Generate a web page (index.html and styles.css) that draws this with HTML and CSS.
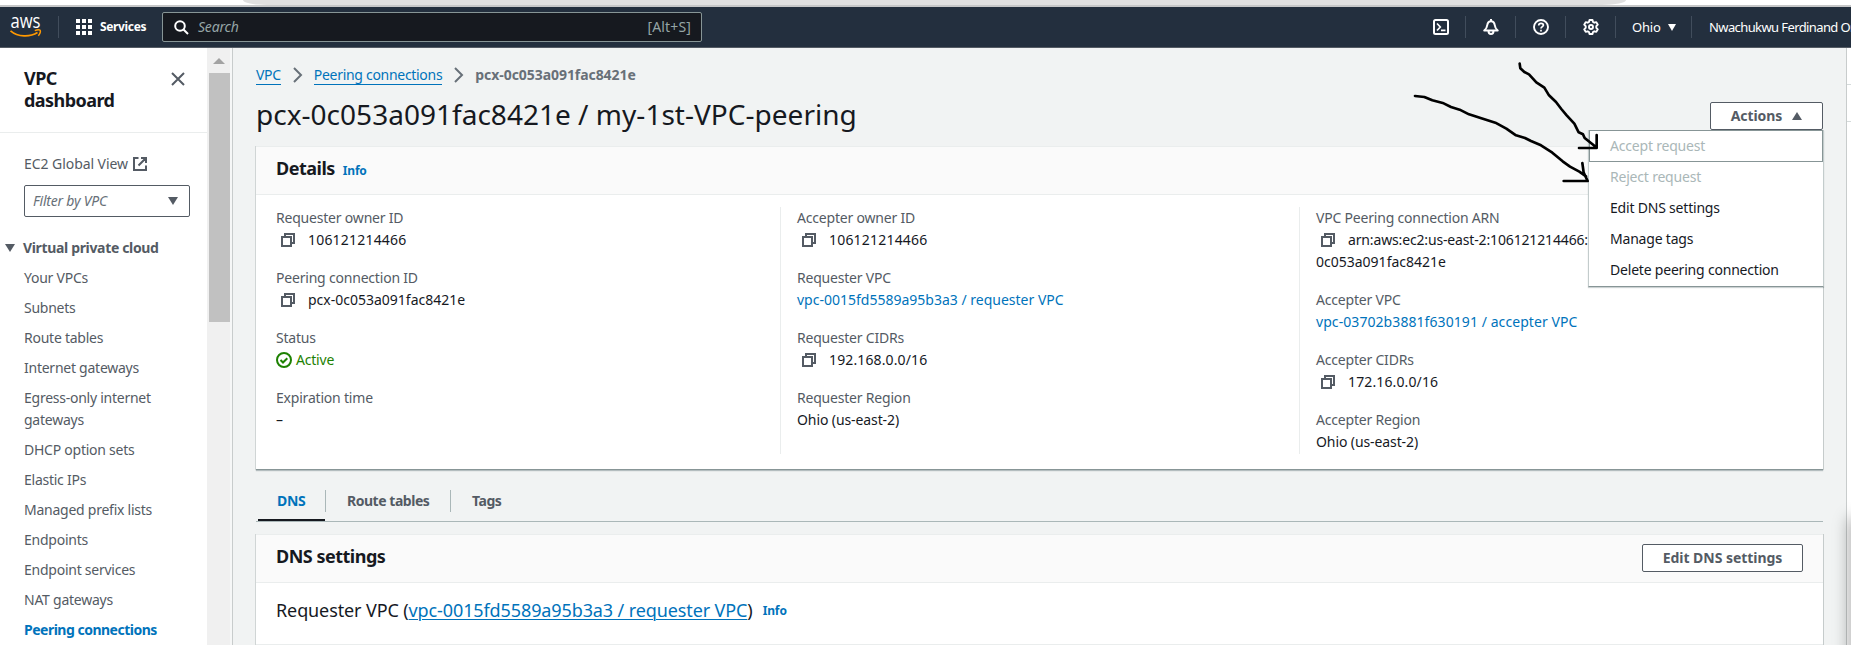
FILE: index.html
```html
<!DOCTYPE html>
<html lang="en">
<head>
<meta charset="utf-8">
<title>Peering connections | VPC Console</title>
<link rel="stylesheet" href="styles.css">
</head>
<body>
<svg class="defs" width="0" height="0" aria-hidden="true">
  <symbol id="copy" viewBox="0 0 16 16"><path d="M2 5h9v9H2zM5 5V2h9v9h-3" fill="none" stroke="#545b64" stroke-width="2"/></symbol>
  <symbol id="chev" viewBox="0 0 16 16"><path d="M4 1l7 7-7 7" fill="none" stroke="#687078" stroke-width="2"/></symbol>
</svg>
<div class="browser"><div class="omnibox"></div></div>
<header class="topnav">
  <div class="logo"><svg width="32" height="28" viewBox="0 0 32 28"><text class="aws" x="0.5" y="17" textLength="30" lengthAdjust="spacingAndGlyphs">aws</text><path d="M.5 19.800C8 26.200 20 26.200 27.500 21.500" fill="none" stroke="#f90" stroke-width="1.700"/><path d="M24.800 19.700c2-1 4.600-1.100 5.400-.4.600.9-.2 3.700-1.900 5.400" fill="none" stroke="#f90" stroke-width="1.500"/></svg></div>
  <div class="services"><svg width="16" height="16" viewBox="0 0 16 16" fill="#fff"><path d="M0 0h4v4H0zM6 0h4v4H6zM12 0h4v4h-4zM0 6h4v4H0zM6 6h4v4H6zM12 6h4v4h-4zM0 12h4v4H0zM6 12h4v4H6zM12 12h4v4h-4z"/></svg><b>Services</b></div>
  <div class="search"><svg width="15" height="15" viewBox="0 0 15 15" fill="none" stroke="#fff" stroke-width="2"><circle cx="6" cy="6" r="4.800"/><path d="M9.500 9.500l4.500 4.500"/></svg><i>Search</i><span class="shortcut">[Alt+S]</span></div>
  <div class="tools">
    <span class="tool"><svg width="16" height="16" viewBox="0 0 16 16" fill="none" stroke="#fff" stroke-width="2"><rect x="1" y="1" width="14" height="14" rx="1.500"/><path d="M4 4.500L7.300 8 4 11.500M8 11.300h4.500" stroke-width="1.700"/></svg></span>
    <span class="tool"><svg width="16" height="16" viewBox="0 0 16 16" fill="none" stroke="#fff" stroke-width="2" stroke-linejoin="round"><path d="M1.300 11.500h13.400C12.300 9.500 12 8.500 11.700 6 11.400 3.200 10 2.200 8 2.200S4.600 3.200 4.300 6C4 8.500 3.700 9.500 1.300 11.500zM8 0v2M5.500 12c0 4 5 4 5 0"/></svg></span>
    <span class="tool"><svg width="16" height="16" viewBox="0 0 16 16" fill="none" stroke="#fff" stroke-width="1.900"><circle cx="8" cy="8" r="7"/><path d="M5.700 6.500c0-3 4.700-2.800 4.700-.2C10.400 7.700 8 7.700 8 9.600M8 10.700v1.900" stroke-width="1.700"/></svg></span>
    <span class="tool"><svg width="16" height="16" viewBox="0 0 16 16" fill="none" stroke="#fff" stroke-width="1.900" stroke-linejoin="round"><path d="M6.500 1h3l.5 2 1.300.7 2-.6 1.500 2.600L13.300 7.200v1.600l1.500 1.500-1.500 2.600-2-.6-1.300.7-.5 2h-3l-.5-2-1.300-.7-2 .6-1.500-2.600L2.700 8.800V7.200L1.200 5.700l1.500-2.600 2 .6L6 3z"/><circle cx="8" cy="8" r="2"/></svg></span>
    <span class="region"><span>Ohio</span><svg width="8" height="7" viewBox="0 0 8 7"><path d="M0 0h8L4 7z" fill="#fff"/></svg></span>
    <span class="user">Nwachukwu Ferdinand On</span>
  </div>
</header>
<div class="app">
  <aside class="side">
    <div class="side-head"><h2>VPC<br>dashboard</h2><svg width="14" height="14" viewBox="0 0 14 14"><path d="M1 1l12 12M13 1L1 13" stroke="#545b64" stroke-width="2"/></svg></div>
    <div class="global"><span>EC2 Global View</span><svg width="14" height="14" viewBox="0 0 14 14" fill="none" stroke="#545b64" stroke-width="2"><path d="M5.500 1H1v12h12V8.500M8 1h5v5M13 1L5.500 8.500"/></svg></div>
    <div class="filter"><i>Filter by VPC</i><svg width="10" height="8" viewBox="0 0 10 8"><path d="M0 0h10L5 8z" fill="#545b64"/></svg></div>
    <div class="group"><svg width="10" height="8" viewBox="0 0 10 8"><path d="M0 0h10L5 8z" fill="#545b64"/></svg><b>Virtual private cloud</b></div>
    <nav class="links">
      <a>Your VPCs</a><a>Subnets</a><a>Route tables</a><a>Internet gateways</a><a>Egress-only internet<br>gateways</a><a>DHCP option sets</a><a>Elastic IPs</a><a>Managed prefix lists</a><a>Endpoints</a><a>Endpoint services</a><a>NAT gateways</a><a class="current">Peering connections</a>
    </nav>
  </aside>
  <div class="scroll"><svg width="12" height="6" viewBox="0 0 12 6"><path d="M0 6l6-6 6 6z" fill="#a3a3a3"/></svg><div class="thumb"></div></div>
  <main class="main">
    <div class="crumbs"><a>VPC</a><svg width="16" height="16"><use href="#chev"/></svg><a>Peering connections</a><svg width="16" height="16"><use href="#chev"/></svg><b>pcx-0c053a091fac8421e</b></div>
    <div class="heading"><h1>pcx-0c053a091fac8421e / my-1st-VPC-peering</h1>
      <div class="actions"><div class="btn open"><span>Actions</span><svg width="10" height="8" viewBox="0 0 10 8"><path d="M0 8h10L5 0z" fill="#545b64"/></svg></div>
        <div class="menu"><div class="off focus">Accept request</div><div class="off">Reject request</div><div>Edit DNS settings</div><div>Manage tags</div><div>Delete peering connection</div></div>
      </div>
    </div>
    <section class="panel details">
      <div class="panel-head"><h3>Details</h3><b class="info">Info</b></div>
      <div class="cols">
        <dl><dt>Requester owner ID</dt><dd><svg class="cp"><use href="#copy"/></svg><span class="digits">106121214466</span></dd><dt>Peering connection ID</dt><dd><svg class="cp"><use href="#copy"/></svg><span class="num">pcx-0c053a091fac8421e</span></dd><dt>Status</dt><dd class="ok"><svg width="16" height="16" viewBox="0 0 16 16" fill="none" stroke="#1d8102" stroke-width="2"><circle cx="8" cy="8" r="7"/><path d="M4.500 8l2.500 2.500 4.300-4.300"/></svg>Active</dd><dt>Expiration time</dt><dd>–</dd></dl>
        <dl><dt>Accepter owner ID</dt><dd><svg class="cp"><use href="#copy"/></svg><span class="digits">106121214466</span></dd><dt>Requester VPC</dt><dd><a class="num">vpc-0015fd5589a95b3a3 / requester VPC</a></dd><dt>Requester CIDRs</dt><dd><svg class="cp"><use href="#copy"/></svg><span class="cidr">192.168.0.0/16</span></dd><dt>Requester Region</dt><dd><span class="place">Ohio (us-east-2)</span></dd></dl>
        <dl><dt>VPC Peering connection ARN</dt><dd class="arn"><svg class="cp"><use href="#copy"/></svg><span class="arn-text">arn:aws:ec2:us-east-2:106121214466:</span></dd><dd><span class="num">0c053a091fac8421e</span></dd><dt>Accepter VPC</dt><dd><a class="wide">vpc-03702b3881f630191 / accepter VPC</a></dd><dt>Accepter CIDRs</dt><dd><svg class="cp"><use href="#copy"/></svg><span class="cidr">172.16.0.0/16</span></dd><dt>Accepter Region</dt><dd><span class="place">Ohio (us-east-2)</span></dd></dl>
      </div>
    </section>
    <div class="tabs"><div class="tab on">DNS</div><div class="tab second">Route tables</div><div class="tab">Tags</div></div>
    <section class="panel dns">
      <div class="panel-head"><h3>DNS settings</h3><div class="btn edit">Edit DNS settings</div></div>
      <div class="vpc-line"><span>Requester VPC (<a>vpc-0015fd5589a95b3a3 / requester VPC</a>)</span><b class="info">Info</b></div>
    </section>
  </main>
  <div class="rail"><div class="rail-top"></div><div class="rail-mid"></div></div>
</div>
<div class="edge-shadow"></div>
<svg class="marks" width="240" height="200" viewBox="0 0 720 600" fill="none" stroke="#000" stroke-width="8" stroke-linecap="round" stroke-linejoin="round">
  <path d="M446 191l2 14 12 11 14 7 22 24 24 16 14 23 21 20 16 21 16 19 23 25 13 26 13 6 5 11 31 25M677 405v39h-53"/>
  <path d="M132 288l28 3 24 10 34 9 22 11 26 8 28 14 37 12 42 13 33 18 29 20 27 8 18 9 30 13 34 22 31 26 22 16 28 15 20 14M634 489l4 29 12 25h-72"/>
</svg>
</body>
</html>
```
FILE: styles.css
```css
* { box-sizing: border-box; }
html { height: 645px; overflow: hidden; }
body { margin: 0; width: 1851px; height: 645px; overflow: hidden; position: relative; background: #f1f3f3; color: #16191f; font: 14px/22px "Noto Sans", "Open Sans", sans-serif; letter-spacing: -0.2px; white-space: nowrap; }
svg { display: block; flex: none; }
.defs { position: absolute; }
h1, h2, h3, dl, dd { margin: 0; }
.browser { height: 7px; background: #fff; border-bottom: 2px solid #c6c7c8; }
.omnibox { height: 5px; margin: 0 225px 0 243px; background: #e0e0e0; border-radius: 0 0 24px 24px / 0 0 5px 5px; }
.topnav { height: 41px; display: flex; align-items: center; background: #232f3e; border-bottom: 1px solid #545b64; color: #fff; }
.logo { width: 59px; height: 22px; padding-left: 10px; border-right: 1px solid #414d5c; }
.logo svg { margin-top: -5px; overflow: visible; }
.aws { font: 500 20px "Open Sans", sans-serif; letter-spacing: 0; fill: #fff; }
.services { display: flex; align-items: center; gap: 8px; width: 103px; padding-left: 17px; font-size: 12px; letter-spacing: -0.35px; }
.search { width: 540px; height: 30px; display: flex; align-items: center; padding: 0 10px 0 11px; background: #16191f; border: 1px solid #879596; border-radius: 2px; color: #95a5a6; }
.search i { margin-left: 9px; flex: 1; }
.shortcut { letter-spacing: 0.15px; }
.tools { display: flex; align-items: center; margin-left: 714px; flex: 1; overflow: hidden; height: 40px; font-size: 13px; }
.tool { width: 50px; height: 22px; display: flex; align-items: center; justify-content: center; border-right: 1px solid #414d5c; flex: none; }
.region { display: flex; align-items: center; gap: 7px; width: 76px; height: 22px; padding-left: 16px; border-right: 1px solid #414d5c; flex: none; }
.user { padding-left: 17px; letter-spacing: -0.6px; }
.app { display: flex; height: 597px; }
.side { width: 207px; background: #fff; overflow: hidden; color: #545b64; }
.side-head { display: flex; justify-content: space-between; height: 85px; padding: 20px 22px 0 24px; border-bottom: 1px solid #eaeded; }
.side-head h2 { color: #16191f; font-size: 18px; line-height: 22px; letter-spacing: -0.55px; margin-top: -1px; }
.side-head svg { margin-top: 4px; }
.global { display: flex; align-items: center; gap: 5px; padding: 20px 0 0 24px; letter-spacing: -0.06px; }
.filter { display: flex; align-items: center; justify-content: space-between; margin: 10px 0 0 24px; width: 166px; height: 32px; padding: 0 11px 0 8px; border: 1px solid #545b64; border-radius: 2px; color: #687078; }
.group { display: flex; align-items: center; gap: 8px; padding: 20px 0 0 5px; letter-spacing: -0.34px; }
.links { display: grid; gap: 8px; padding: 8px 0 0 24px; letter-spacing: -0.25px; }
.current { color: #0073bb; font-weight: 700; letter-spacing: -0.5px; }
.scroll { width: 26px; background: #f0f0f0; border-right: 1px solid #c8cccc; box-shadow: inset -2px 0 #f6f7f7; display: flex; flex-direction: column; align-items: center; padding: 10px 1px 0 0; }
.thumb { margin-top: 9px; width: 21px; height: 249px; background: #c1c1c1; }
.main { width: 1613px; padding: 16px 23px 0; display: flex; flex-direction: column; }
.crumbs { display: flex; align-items: center; height: 22px; color: #687078; }
.crumbs a { color: #0073bb; line-height: 19px; border-bottom: 1px solid #0073bb; letter-spacing: -0.3px; }
.crumbs b { letter-spacing: -0.06px; }
.crumbs svg { margin: 0 8px 0 9px; }
.heading { display: flex; justify-content: space-between; height: 60px; padding-top: 10px; }
h1 { font-size: 28px; line-height: 36px; font-weight: 400; letter-spacing: 0.02px; }
.actions { position: relative; padding-top: 6px; }
.btn { height: 28px; display: flex; align-items: center; justify-content: center; background: #fff; border: 1px solid #545b64; border-radius: 2px; color: #545b64; font-weight: 700; letter-spacing: -0.05px; }
.open { width: 113px; gap: 10px; }
.edit { width: 161px; }
.menu { position: absolute; right: -1px; top: 34px; width: 236px; height: 157px; background: #fff; border: 1px solid #c3cccc; border-top: 0; border-bottom: 1px solid #879596; box-shadow: 0 1px 1px rgba(0,28,36,.2); z-index: 2; }
.menu div { height: 31px; line-height: 29px; padding-left: 21px; }
.menu .off { color: #aab7b8; }
.menu .focus { height: 32px; padding-left: 20px; border: 1px solid #879596; }
.panel { background: #fff; border: 1px solid #eaeded; border-width: 1px 0; box-shadow: -1px 0 #d0d5d5, 1px 0 #c5cbcb; }
.details { height: 324px; border-bottom: 1px solid #879596; box-shadow: -1px 0 #d0d5d5, 1px 0 #c5cbcb, 0 1px 1px rgba(0,28,36,.25); }
.panel-head { height: 48px; display: flex; align-items: center; padding: 0 20px 2px; background: #fafafa; border-bottom: 1px solid #eaeded; }
.panel-head h3 { font-size: 18px; letter-spacing: -0.5px; padding-bottom: 3px; }
.info { color: #0073bb; font-size: 12px; margin-left: 8px; padding-top: 2px; }
.cols { display: grid; grid-template-columns: 504px 519px 1fr; padding: 12px 0 0 20px; }
dl { height: 247px; }
dl + dl { border-left: 1px solid #eaeded; padding-left: 16px; }
dt { color: #545b64; height: 22px; }
dd { height: 22px; margin-bottom: 16px; display: flex; align-items: center; }
dd a { color: #0073bb; }
.num { letter-spacing: 0; }
.digits { letter-spacing: 0.2px; }
.cidr { letter-spacing: 0.13px; }
.wide { letter-spacing: 0.07px; }
.place { letter-spacing: -0.1px; }
.arn { margin-bottom: 0; }
.arn-text { letter-spacing: -0.15px; }
.cp { width: 16px; height: 16px; margin: 0 12px 0 4px; }
.ok { color: #1d8102; gap: 4px; }
.tabs { display: flex; height: 52px; padding: 20px 0 0 2px; border-bottom: 1px solid #aab7b8; font-weight: 700; letter-spacing: -0.47px; }
.tab { height: 31px; padding: 0 21px; color: #545b64; line-height: 21px; }
.tab + .tab { background: linear-gradient(#aab7b8, #aab7b8) 0 0 / 1px 22px no-repeat; padding-left: 22px; }
.tab.second { width: 125px; }
.on { width: 67px; color: #0073bb; border-bottom: 2px solid #16191f; padding: 0 19px; letter-spacing: -0.3px; }
.dns { margin-top: 12px; flex: 1; }
.dns .panel-head { justify-content: space-between; }
.vpc-line { display: flex; align-items: center; padding: 14px 20px; font-size: 18px; letter-spacing: -0.11px; }
.vpc-line a { color: #0073bb; text-decoration: underline; text-underline-offset: 2px; text-decoration-thickness: 1px; }
.vpc-line .info { margin-left: 10px; padding-top: 3px; }
.rail { flex: 1; border-left: 1px solid #c8cccc; background: #fff; }
.rail-top { height: 37px; border-bottom: 1px solid #d5dbdb; }
.rail-mid { height: 37px; border-bottom: 1px solid #d5dbdb; }
.edge-shadow { position: absolute; right: -10px; top: 520px; width: 10px; height: 140px; box-shadow: 0 0 16px 2px rgba(0,0,0,.35); }
.marks { position: absolute; left: 1371px; top: 0; z-index: 3; }
```
